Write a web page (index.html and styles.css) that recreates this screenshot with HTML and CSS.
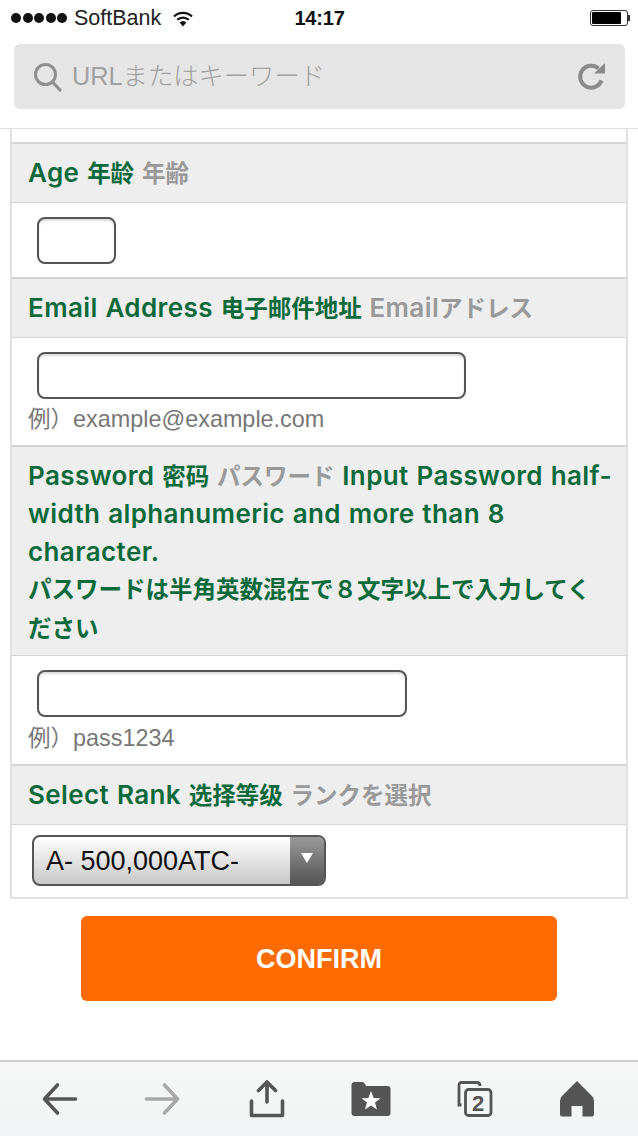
FILE: index.html
```html
<!DOCTYPE html>
<html lang="ja">
<head>
<meta charset="utf-8">
<title>Form</title>
<link rel="stylesheet" href="styles.css">
</head>
<body>
<header class="chrome">
  <div class="status">
    <div class="status-left">
      <span class="dots"><i></i><i></i><i></i><i></i><i></i></span>
      <span class="carrier">SoftBank</span>
      <svg class="wifi" width="22" height="17" viewBox="0 0 22 17"><path d="M11 16.500 L7.600 12.600 A5 5 0 0 1 14.400 12.600Z" fill="#111"/><path d="M5.200 9.800 A8.600 8.600 0 0 1 16.800 9.800" fill="none" stroke="#111" stroke-width="2.200"/><path d="M2 6.500 A13 13 0 0 1 20 6.500" fill="none" stroke="#111" stroke-width="2.200"/></svg>
    </div>
    <div class="clock">14:17</div>
    <div class="battery"><span class="battery-body"><span class="battery-fill"></span></span><span class="battery-tip"></span></div>
  </div>
  <div class="urlbar">
    <svg class="search" width="30" height="30" viewBox="0 0 30 30"><circle cx="12.500" cy="12.500" r="10" fill="none" stroke="#8f8f8f" stroke-width="3"/><path d="M19.500 20 L27 28" stroke="#8f8f8f" stroke-width="3.200" stroke-linecap="round"/></svg>
    <span class="url-text">URLまたはキーワード</span>
    <svg class="reload" width="30" height="30" viewBox="0 0 30 30"><path d="M24.500 18.500 A11 11 0 1 1 21.500 6.500" fill="none" stroke="#8a8a8a" stroke-width="4"/><path d="M17 11.500 H28 V1Z" fill="#8a8a8a"/></svg>
  </div>
</header>

<main class="form">
  <div class="spacer-row"></div>
  <div class="head"><b>Age <span class="cj">年龄</span></b> <span class="cj">年齢</span></div>
  <div class="cell age-cell"><div class="input age"></div></div>
  <div class="head"><b>Email Address <span class="cj">电子邮件地址</span></b> Email<span class="cj">アドレス</span></div>
  <div class="cell"><div class="input email"></div><p class="hint"><span class="hint-cj">例）</span>example@example.com</p></div>
  <div class="head tall"><b>Password <span class="cj">密码</span></b> <span class="cj">パスワード</span> <b>Input Password half-width alphanumeric and more than 8 character.<br><span class="cj">パスワードは半角英数混在で８文字以上で入力してください</span></b></div>
  <div class="cell"><div class="input pass"></div><p class="hint pass-hint"><span class="hint-cj">例）</span>pass1234</p></div>
  <div class="head"><b>Select Rank <span class="cj">选择等级</span></b> <span class="cj">ランクを選択</span></div>
  <div class="cell select-cell">
    <div class="select"><span class="select-value">A- 500,000ATC-</span><span class="select-arrow"><svg width="14" height="12" viewBox="0 0 14 12"><path d="M1 1 H13 L7 11Z" fill="#fff"/></svg></span></div>
  </div>
</main>
<div class="actions"><div class="confirm">CONFIRM</div></div>

<footer class="toolbar">
  <svg width="36" height="36" viewBox="0 0 36 36"><path d="M33.500 18 H3 M15.500 4 L2.500 18 L15.500 32" fill="none" stroke="#555" stroke-width="3.600" stroke-linecap="round" stroke-linejoin="round"/></svg>
  <svg width="36" height="36" viewBox="0 0 36 36"><path d="M2.500 18 H33 M20.500 4 L33.500 18 L20.500 32" fill="none" stroke="#a8a8a8" stroke-width="3.600" stroke-linecap="round" stroke-linejoin="round"/></svg>
  <svg class="share" width="36" height="38" viewBox="0 0 36 38"><path d="M18 2 V22 M9.500 10.500 L18 2 L26.500 10.500" fill="none" stroke="#555" stroke-width="3.600" stroke-linecap="round" stroke-linejoin="round"/><path d="M2.500 21 V35.500 H33.500 V21" fill="none" stroke="#555" stroke-width="3.600" stroke-linejoin="round" stroke-linecap="round"/></svg>
  <svg width="40" height="36" viewBox="0 0 40 36"><path d="M0.500 4 Q0.500 1 3.500 1 H11 Q13 1 14 3 L15 5 H36.500 Q39.500 5 39.500 8 V32 Q39.500 35 36.500 35 H3.500 Q0.500 35 0.500 32Z" fill="#555"/><path d="M20 10 L22.600 17 L29.500 17.200 L24 21.500 L26 28.500 L20 24.400 L14 28.500 L16 21.500 L10.500 17.200 L17.400 17Z" fill="#fff"/></svg>
  <svg width="36" height="36" viewBox="0 0 36 36"><path d="M4.500 24 H2 V4 Q2 1.500 4.500 1.500 H20 Q23 1.500 23 5" fill="none" stroke="#555" stroke-width="2.800"/><rect x="8.500" y="8.500" width="25.500" height="26" rx="3" fill="none" stroke="#555" stroke-width="2.800"/><text class="tabs-count" x="21.200" y="29.500" text-anchor="middle">2</text></svg>
  <svg width="36" height="36" viewBox="0 0 36 36"><path d="M18 0 L33 15 Q35 17 35 20 V33 Q35 35.500 33 35.500 H23.500 V25 H12.500 V35.500 H3 Q1 35.500 1 33 V20 Q1 17 3 15Z" fill="#555"/></svg>
</footer>
</body>
</html>
```
FILE: styles.css
```css
* { box-sizing: border-box; }
html, body { margin: 0; padding: 0; }
body {
  width: 638px;
  height: 1136px;
  overflow: hidden;
  display: flex;
  flex-direction: column;
  background: #fff;
  font-family: "Liberation Sans", "Noto Sans CJK JP", sans-serif;
}
.chrome { height: 129px; border-bottom: 1px solid #e2e2e2; padding: 0 13px 0 14px; flex: none; }
.status { height: 36px; margin: 0 -5px 8px -3px; display: grid; grid-template-columns: 1fr auto 1fr; align-items: center; }
.status-left { display: flex; align-items: center; gap: 7px; }
.dots { display: flex; gap: 1.500px; }
.dots i { width: 10px; height: 10px; border-radius: 50%; background: #111; display: block; }
.carrier { font-size: 21.500px; color: #222; }
.wifi { margin-left: 4px; }
.clock { font-size: 20px; font-weight: 700; color: #111; margin-left: -2px; letter-spacing: -0.200px; }
.battery { justify-self: end; display: flex; align-items: center; }
.battery-body { width: 38px; height: 16px; border: 1px solid #333; border-radius: 3px; padding: 1px; display: block; }
.battery-fill { display: block; width: 29px; height: 100%; background: #000; border-radius: 1px; }
.battery-tip { width: 2px; height: 6px; background: #333; display: block; }
.urlbar { height: 65px; background: #e5e5e5; border-radius: 6px; display: flex; align-items: center; padding: 0 18px 2px 19px; gap: 9px; }
.search { flex: none; margin-top: 2px; }
.url-text { font-size: 25.300px; color: #a0a0a0; flex: 1; font-weight: 300; line-height: 36px; }
.reload { flex: none; margin-top: 2px; }

.form { margin: 0 10px; border: 2px solid #e0e0e0; border-top: 0; flex: none; }
.spacer-row { height: 13px; }
.head { border-top: 2px solid #d4d4d4; border-bottom: 2px solid #d4d4d4; background: #eee; padding: 0 12px 0 16px; height: 62px; margin-bottom: -1px; line-height: 57px; font-family: Inter, "Noto Sans CJK JP", sans-serif; font-size: 26px; letter-spacing: 0.400px; word-spacing: 0.800px; color: #999; font-weight: 600; }
.head b { color: #0b6a3b; font-weight: 600; }
.cj { font-size: 23.500px; letter-spacing: 0; font-weight: 600; }
.head.tall { height: 212px; padding-top: 10px; line-height: 37.400px; }
.cell { background: #fff; padding: 14px 16px 0; }
.age-cell { height: 74px; }
.input { border: 2px solid #555; border-radius: 8px; height: 47px; margin-left: 9px; box-shadow: inset 0 2px 2px #ddd; background: #fff; }
.input.age { width: 79px; }
.input.email { width: 429px; }
.input.pass { width: 370px; }
.hint { margin: 3px 0 0; font-size: 23.400px; line-height: 34px; color: #777; height: 43px; }
.hint.pass-hint { margin-top: 4px; }
.hint-cj { font-size: 22.500px; }
.select-cell { padding: 10px 0 0 20px; height: 72px; }
.select { width: 294px; height: 51px; border: 2px solid #555; border-radius: 8px; display: flex; overflow: hidden; background: linear-gradient(#fff, #c8c8c8); }
.select-value { flex: 1; font-size: 27px; line-height: 49px; color: #111; padding-left: 12px; }
.select-arrow { width: 34px; background: linear-gradient(#999, #555); display: flex; align-items: center; justify-content: center; padding-bottom: 6px; }
.actions { padding: 17px 81px 0; flex: none; }
.confirm { height: 85px; background: #ff6b00; border-radius: 6px; color: #fff; font-size: 27px; font-weight: 700; display: flex; align-items: center; justify-content: center; padding-top: 2px; }
.toolbar { margin-top: auto; height: 76px; flex: none; border-top: 2px solid #ccc; background: linear-gradient(#f6f6f6, #f2f5f5); display: flex; justify-content: space-between; align-items: center; padding: 0 43px 0 42px; }
.share { margin-left: 3px; }
.tabs-count { font-family: "Liberation Sans", sans-serif; font-size: 22px; font-weight: 700; fill: #555; }
```
